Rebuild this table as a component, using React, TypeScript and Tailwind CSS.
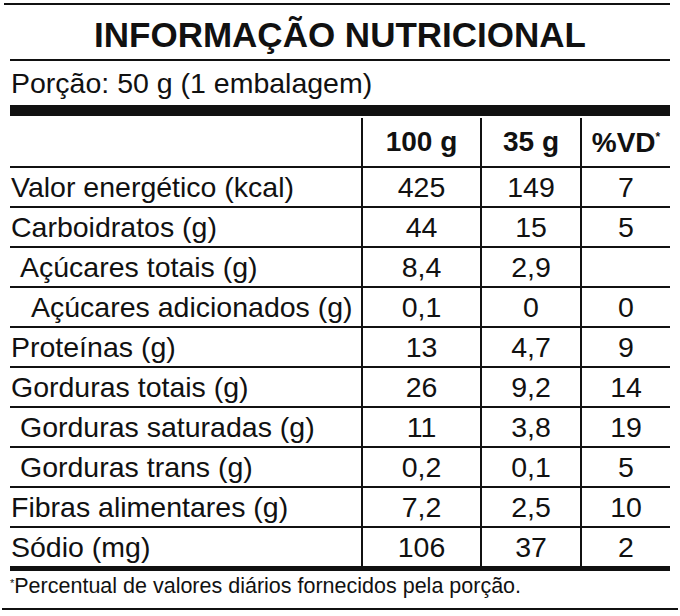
const rows = [
  { label: "Valor energético (kcal)", indent: 0, a: "425", b: "149", vd: "7" },
  { label: "Carboidratos (g)", indent: 0, a: "44", b: "15", vd: "5" },
  { label: "Açúcares totais (g)", indent: 1, a: "8,4", b: "2,9", vd: "" },
  { label: "Açúcares adicionados (g)", indent: 2, a: "0,1", b: "0", vd: "0" },
  { label: "Proteínas (g)", indent: 0, a: "13", b: "4,7", vd: "9" },
  { label: "Gorduras totais (g)", indent: 0, a: "26", b: "9,2", vd: "14" },
  { label: "Gorduras saturadas (g)", indent: 1, a: "11", b: "3,8", vd: "19" },
  { label: "Gorduras trans (g)", indent: 1, a: "0,2", b: "0,1", vd: "5" },
  { label: "Fibras alimentares (g)", indent: 0, a: "7,2", b: "2,5", vd: "10" },
  { label: "Sódio (mg)", indent: 0, a: "106", b: "37", vd: "2" },
];

const indentClass = ["pl-0", "pl-[10px]", "pl-[21px]"];

export default function App() {
  return (
    <div
      className="w-[680px] h-[616px] bg-white text-[#111] overflow-hidden"
      style={{ fontFamily: '"Liberation Sans", Arial, sans-serif' }}
    >
      <div className="pt-[3px] pl-[4px] pr-[10px]">
        <div className="h-[2px] bg-[#111]" />
      </div>

      <div className="px-[10px]">
        {/* Title */}
        <h1 className="h-[54px] flex items-center justify-center pt-[4px] text-[35px] font-bold leading-none">
          INFORMAÇÃO NUTRICIONAL
        </h1>
        <div className="h-[2px] bg-[#111]" />

        <div className="h-[44px] flex items-center pl-[1px] text-[28.5px] leading-none">
          Porção: 50 g (1 embalagem)
        </div>
        <div className="h-[11px] bg-[#111]" />

        {/* Table */}
        <div className="grid grid-cols-[351px_119px_100px_1fr] text-[28.5px] leading-none">
          <div className="h-[50px]" />
          <div className="h-[48px] mt-[2px] border-l-2 border-[#111] flex items-center justify-center text-[28px] font-bold">
            100 g
          </div>
          <div className="h-[48px] mt-[2px] border-l-2 border-[#111] flex items-center justify-center text-[28px] font-bold">
            35 g
          </div>
          <div className="h-[48px] mt-[2px] border-l-2 border-[#111] flex items-start justify-center pt-[11px] text-[28px] font-bold">
            %VD<span className="text-[12px] mt-[2px]">*</span>
          </div>

          {rows.map((r) => (
            <div key={r.label} className="contents">
              <div
                className={`h-[40px] border-t-2 border-[#111] flex items-center pl-[1px] ${indentClass[r.indent]}`}
              >
                {r.label}
              </div>
              <div className="h-[40px] border-t-2 border-l-2 border-[#111] flex items-center justify-center">
                {r.a}
              </div>
              <div className="h-[40px] border-t-2 border-l-2 border-[#111] flex items-center justify-center">
                {r.b}
              </div>
              <div className="h-[40px] border-t-2 border-l-2 border-[#111] flex items-center justify-center">
                {r.vd}
              </div>
            </div>
          ))}
        </div>
        <div className="h-[5px] bg-[#111]" />

        <div className="h-[37px] flex items-start pt-[5px] text-[21.5px] leading-none">
          <span className="text-[11px] mt-[2px]">*</span>Percentual de valores diários fornecidos pela porção.
        </div>
      </div>

      <div className="pl-[2px] pr-[2px]">
        <div className="h-[2px] bg-[#111]" />
      </div>
    </div>
  );
}
